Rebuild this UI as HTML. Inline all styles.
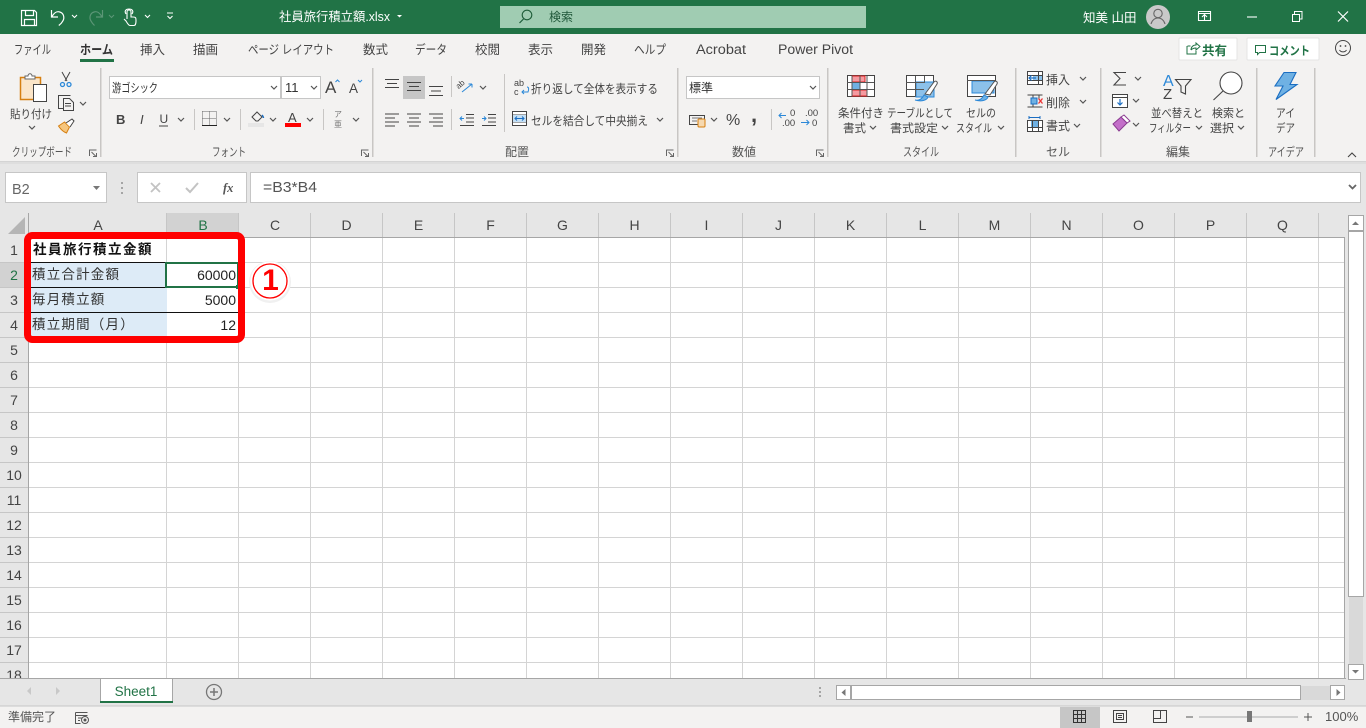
<!DOCTYPE html>
<html lang="ja"><head><meta charset="utf-8"><title>社員旅行積立額.xlsx</title>
<style>
html,body{margin:0;padding:0;background:#e6e6e6;overflow:hidden}
svg{display:block;position:absolute;left:0;top:0}
text{font-family:"Liberation Sans","Noto Sans CJK JP",sans-serif;font-size:12px;fill:#444}
.t{fill:#444;font-size:12.5px}
.g{font-size:12px;fill:#555;text-anchor:middle}
.h{font-size:14px;fill:#444;text-anchor:middle}
.c{font-size:14px;fill:#222}
.r{font-size:14px;fill:#222;text-anchor:end}
.i{fill:none;stroke:#444;stroke-width:1}
.w{fill:none;stroke:#fff;stroke-width:1.4}
</style></head><body>
<svg width="1366" height="728" viewBox="0 0 1366 728" xmlns="http://www.w3.org/2000/svg">
<defs><path id="v" d="M0 0l3 3 3-3" fill="none" stroke="#555" stroke-width="1.2"/>
<path id="vw" d="M0 0l2.500 2.500L5 0" fill="none" stroke="#fff" stroke-width="1.100"/>
<path id="dl" d="M.5 6v-6h7M2.500 2l4.500 4.500M7.500 3v3.500h-3.500" fill="none" stroke="#666" stroke-width="1"/></defs>

<rect width="1366" height="728" fill="#e6e6e6"/>
<!-- title bar -->
<rect width="1366" height="34" fill="#217346"/>
<path class="w" style="stroke-width:1.200" d="M21.500 10.500h13l2 2v13h-15zM25.500 10.500v5h8v-5M24.500 25.500v-6h10v6"/>
<path class="w" style="stroke-width:1.200" d="M51.500 10v7h6.500M51.800 17c2-4 5-6 8-5 4 1 5 6 3 9-1 2-2 3-4 4.500"/>
<use href="#vw" x="72" y="15"/>
<path d="M102.500 10v7h-6.500M102 17c-2-4-5-6-8-5-4 1-5 6-3 9 1 2 2 3 3.500 4.500" fill="none" stroke="#5c9677" stroke-width="1.200"/>
<path d="M109 15l2.500 2.500 2.500-2.500" fill="none" stroke="#5c9677"/>
<path class="w" style="stroke-width:1.100" d="M127 19v-7a2 2 0 0 1 4 0v5h2c3 0 3 1 3 4 0 3-1 4.500-2 4.500h-4c-1 0-2-1-4-4.500l-2-2M126 14c-2-3 0-5 3-5s5 2 3 5"/>
<use href="#vw" x="145" y="15"/>
<path d="M167 13h6M167.500 16l2.500 2.500 2.500-2.500" fill="none" stroke="#fff" stroke-width="1.100"/>
<text x="279" y="21" style="font-size:12.500px;fill:#fff" textLength="111" lengthAdjust="spacingAndGlyphs">社員旅行積立額.xlsx</text>
<path d="M397 15h5l-2.500 2.500z" fill="#fff"/>
<rect x="500" y="6" width="366" height="22" fill="#a0ccb2"/>
<circle cx="527" cy="15" r="4.800" fill="none" stroke="#1d5c38" stroke-width="1.100"/><path d="M523.500 19l-4 4" stroke="#1d5c38" stroke-width="1.200"/>
<text x="549" y="21" style="font-size:12px;fill:#20583a">検索</text>
<text x="1083" y="22" style="font-size:12.500px;fill:#fff">知美 山田</text>
<circle cx="1158" cy="17" r="12" fill="#c9c9c9"/>
<circle cx="1158" cy="13.500" r="4.200" fill="none" stroke="#666" stroke-width="1.100"/><path d="M1151 24c1-4 4-6 7-6s6 2 7 6" fill="none" stroke="#666" stroke-width="1.100"/>
<path class="w" style="stroke-width:1.100" d="M1198.500 11.500h12v9h-12zM1198.500 13.500h12M1204.500 20v-5M1202 17l2.500-2.500 2.500 2.500"/>
<path d="M1247 17h10" stroke="#fff" stroke-width="1.100"/>
<path class="w" style="stroke-width:1" d="M1292.500 14.500h7v7h-7zM1294.500 14v-2.500h7.500v7.500h-2.500"/>
<path d="M1338 11.500l10 10M1348 11.500l-10 10" stroke="#fff" stroke-width="1.200"/>

<!-- ribbon -->
<rect y="34" width="1366" height="127" fill="#f3f2f1"/>
<rect y="161" width="1366" height="1" fill="#d4d4d4"/><rect y="162" width="1366" height="2" fill="#dedede"/>
<text x="14" y="54" class="t" textLength="37" lengthAdjust="spacingAndGlyphs">ファイル</text>
<text x="80" y="54" class="t" style="font-weight:700;fill:#333" textLength="33" lengthAdjust="spacingAndGlyphs">ホーム</text>
<rect x="80" y="59" width="34" height="3" fill="#217346"/>
<text x="140" y="54" class="t">挿入</text>
<text x="193" y="54" class="t">描画</text>
<text x="248" y="54" class="t" textLength="86" lengthAdjust="spacingAndGlyphs">ページ レイアウト</text>
<text x="363" y="54" class="t">数式</text>
<text x="415" y="54" class="t" textLength="32" lengthAdjust="spacingAndGlyphs">データ</text>
<text x="475" y="54" class="t">校閲</text>
<text x="528" y="54" class="t">表示</text>
<text x="581" y="54" class="t">開発</text>
<text x="634" y="54" class="t" textLength="32" lengthAdjust="spacingAndGlyphs">ヘルプ</text>
<text x="696" y="54" style="font-size:13.500px;fill:#444" textLength="50" lengthAdjust="spacingAndGlyphs">Acrobat</text>
<text x="778" y="54" style="font-size:13.500px;fill:#444" textLength="75" lengthAdjust="spacingAndGlyphs">Power Pivot</text>

<rect x="1179" y="38" width="58" height="22" rx="1" fill="#fff" stroke="#e4e4e4"/>
<path d="M1187 46v8h9v-3M1187.500 46h3M1191 50c0-3 2-5 5-5v-2l4 3.500-4 3.500v-2c-2 0-4 1-5 2" fill="none" stroke="#217346"/>
<text x="1202" y="55" style="font-size:12.500px;font-weight:700;fill:#217346">共有</text>
<rect x="1247" y="38" width="72" height="22" rx="1" fill="#fff" stroke="#e4e4e4"/>
<path d="M1255.500 45.500h10v7h-6l-2 2v-2h-2z" fill="none" stroke="#217346"/>
<text x="1269" y="55" style="font-size:12px;font-weight:700;fill:#217346" textLength="41" lengthAdjust="spacingAndGlyphs">コメント</text>
<circle cx="1343" cy="48" r="7.500" fill="none" stroke="#444"/><circle cx="1340.500" cy="46" r=".9" fill="#444"/><circle cx="1345.500" cy="46" r=".9" fill="#444"/><path d="M1339.500 50c1.500 2.500 5.500 2.500 7 0" fill="none" stroke="#444"/>

<g fill="#c8c6c4">
<rect x="100" y="68" width="1.500" height="89"/><rect x="372" y="68" width="1.500" height="89"/><rect x="677" y="68" width="1.500" height="89"/><rect x="827" y="68" width="1.500" height="89"/><rect x="1015" y="68" width="1.500" height="89"/><rect x="1100" y="68" width="1.500" height="89"/><rect x="1256" y="68" width="1.500" height="89"/><rect x="1314" y="68" width="1.500" height="89"/>
<rect x="194" y="109" width="1" height="21"/><rect x="240" y="109" width="1" height="21"/><rect x="323" y="109" width="1" height="21"/>
<rect x="451" y="76" width="1" height="21"/><rect x="451" y="109" width="1" height="21"/><rect x="504" y="74" width="1" height="58"/><rect x="771" y="109" width="1" height="21"/>
</g>

<!-- clipboard -->
<rect x="20.500" y="77.500" width="20" height="22" fill="#fbe5c8" stroke="#d67f10" stroke-width="1.500"/>
<path d="M25 78v-2h3c0-3 4-3 4 0h3v3h-10z" fill="#fff" stroke="#666"/>
<rect x="33.500" y="84.500" width="13" height="17" fill="#fff" stroke="#444"/>
<text x="10" y="118" style="font-size:11.500px;fill:#444" textLength="42" lengthAdjust="spacingAndGlyphs">貼り付け</text>
<use href="#v" x="29" y="126"/>
<path d="M62 72l5 9M70 72l-5 9" fill="none" stroke="#444"/><circle cx="62.500" cy="84.500" r="2" fill="none" stroke="#2b88d8" stroke-width="1.300"/><circle cx="69" cy="84.500" r="2" fill="none" stroke="#2b88d8" stroke-width="1.300"/>
<path d="M63 108.500h-4.500v-13h9l3 0M63.500 98.500h6l4 4v8h-10zM65 103.500h6M65 106h6" fill="none" stroke="#444"/>
<use href="#v" x="80" y="102"/>
<path d="M58.500 126l6-4 5 5-3 6c-3-1-6-4-8-7z" fill="#f6c67e" stroke="#d67f10"/><path d="M66 123l6-4 2 2-4 6" fill="#fff" stroke="#444"/>
<text x="12" y="156" style="font-size:12px;fill:#555" textLength="60" lengthAdjust="spacingAndGlyphs">クリップボード</text>
<use href="#dl" x="89" y="150"/>

<!-- font -->
<rect x="109.500" y="76.500" width="171" height="22" fill="#fff" stroke="#c6c6c6"/>
<text x="112" y="92" style="font-size:12px;fill:#333" textLength="46" lengthAdjust="spacingAndGlyphs">游ゴシック</text>
<use href="#v" x="271" y="86"/>
<rect x="281.500" y="76.500" width="39" height="22" fill="#fff" stroke="#c6c6c6"/>
<text x="285" y="92" style="font-size:13px;fill:#333">11</text>
<use href="#v" x="311" y="86"/>
<text x="325" y="93" style="font-size:17px;fill:#444">A</text><path d="M335.500 82l2-2 2 2" fill="none" stroke="#2b88d8"/>
<text x="349" y="93" style="font-size:13.500px;fill:#444">A</text><path d="M358 80l2 2 2-2" fill="none" stroke="#2b88d8"/>
<text x="116" y="124" style="font-weight:700;font-size:13px;fill:#444">B</text>
<text x="140" y="124" style="font-style:italic;font-size:13px;fill:#444">I</text>
<text x="159.500" y="123" style="font-size:12px;fill:#444">U</text><path d="M159 126h9" stroke="#444"/>
<use href="#v" x="178" y="118"/>
<path d="M202.500 111.500h14v14M202.500 111.500v14M209.500 111.500v14M202.500 118.500h14" fill="none" stroke="#666" stroke-dasharray="1 1"/><path d="M202 125.500h15" stroke="#222"/>
<use href="#v" x="224" y="118"/>
<path d="M252 117l5-5 5 5-4 4h-2z" fill="none" stroke="#444"/><path d="M262 115c1 1 1.500 2 1.500 3" stroke="#1b6ec2" stroke-width="1.500"/><rect x="248" y="123" width="16" height="4" fill="#e6e6e6"/>
<use href="#v" x="270" y="118"/>
<text x="288" y="122" style="font-size:13px;fill:#444">A</text><rect x="285" y="123" width="16" height="4" fill="#f00"/>
<use href="#v" x="307" y="118"/>
<text x="334" y="117" style="font-size:8px;fill:#777">ア</text><text x="334" y="127" style="font-size:8px;fill:#777">亜</text>
<use href="#v" x="353" y="118"/>
<text x="229" y="156" class="g" textLength="34" lengthAdjust="spacingAndGlyphs">フォント</text>
<use href="#dl" x="361" y="150"/>

<!-- alignment -->
<rect x="403" y="76" width="22" height="23" fill="#c6c6c6"/>
<path d="M385 79.500h14M387 83.500h10M385 87.500h14M407 82.500h14M409 86.500h10M407 90.500h14M429 86.500h14M431 91h10M429 95.500h14" stroke="#444" fill="none"/>
<path d="M385 114h14M385 118h10M385 122h14M385 126h10M407 114h14M409 118h10M407 122h14M409 126h10M429 114h14M433 118h10M429 122h14M433 126h10" stroke="#444"/>
<path d="M462 92l10-8M472 84h-3.500M472 84v3.500" fill="none" stroke="#2b88d8"/><text x="458" y="88" style="font-size:8px;fill:#444" transform="rotate(-40 460 88)">ab</text>
<use href="#v" x="480" y="86"/>
<path d="M460 125.500h14M466 114.500h8M466 118h8M466 122h8" stroke="#444"/><path d="M464 118.500h-4m2-2l-2 2 2 2" fill="none" stroke="#2b88d8"/>
<path d="M482 125.500h14M488 114.500h8M488 122h8M488 118h8" stroke="#444"/><path d="M482 118.500h4m-2-2l2 2-2 2" fill="none" stroke="#2b88d8"/>
<text x="514" y="86" style="font-size:9px;fill:#444">ab</text><text x="514" y="95" style="font-size:9px;fill:#444">c</text><path d="M527 87c2 0 2 2 1 5h-6m2-2l-2 2 2 2" fill="none" stroke="#2b88d8"/>
<text x="531" y="93" style="font-size:12px;fill:#444" textLength="127" lengthAdjust="spacingAndGlyphs">折り返して全体を表示する</text>
<rect x="512.500" y="111.500" width="14" height="14" fill="#fff" stroke="#444"/><path d="M512 115h15M512 122h15" stroke="#444"/><rect x="513" y="115" width="13" height="7" fill="#c5e0f5"/><path d="M515 118.500h9m-2-2l2 2-2 2m-5-4l-2 2 2 2" fill="none" stroke="#1b6ec2"/>
<text x="531" y="125" style="font-size:12px;fill:#444" textLength="117" lengthAdjust="spacingAndGlyphs">セルを結合して中央揃え</text>
<use href="#v" x="657" y="118"/>
<text x="517" y="156" class="g">配置</text>
<use href="#dl" x="666" y="150"/>

<!-- number -->
<rect x="686.500" y="76.500" width="133" height="22" fill="#fff" stroke="#c6c6c6"/>
<text x="689" y="92" style="font-size:12px;fill:#333">標準</text>
<use href="#v" x="810" y="86"/>
<rect x="689.500" y="115.500" width="15" height="9" fill="none" stroke="#444"/><path d="M692 118h10M692 121h5" stroke="#777"/>
<rect x="698" y="119" width="7" height="8" rx="1" fill="#f6d9b0" stroke="#d67f10"/>
<use href="#v" x="711" y="118"/>
<text x="726" y="125" style="font-size:16px;fill:#444">%</text>
<text x="751" y="122" style="font-size:22px;font-weight:700;fill:#444">,</text>
<text x="790" y="116" style="font-size:9.500px;fill:#444">0</text><text x="782" y="126" style="font-size:9.500px;fill:#444">.00</text><path d="M786 115.500h-7m2.500-2.500l-2.500 2.500 2.500 2.500" fill="none" stroke="#2b88d8"/>
<text x="805" y="116" style="font-size:9.500px;fill:#444">.00</text><text x="812" y="126" style="font-size:9.500px;fill:#444">0</text><path d="M801 122.500h8m-2.500-2.500l2.500 2.500-2.500 2.500" fill="none" stroke="#2b88d8"/>
<text x="744" y="156" class="g">数値</text>
<use href="#dl" x="816" y="150"/>

<!-- styles -->
<rect x="847.500" y="75.500" width="27" height="21" fill="#fff" stroke="#444"/>
<rect x="852" y="76" width="13" height="6" fill="#f59aa0" stroke="#d22"/><rect x="852" y="83" width="8" height="6" fill="#6fb1e3"/><rect x="852" y="90" width="15" height="6" fill="#f59aa0" stroke="#d22"/>
<path d="M847 82.500h27M847 89.500h27M852 76v20M860 76v20M867 76v20" stroke="#555" fill="none"/>
<text x="838" y="117" style="font-size:11.500px;fill:#444" textLength="46" lengthAdjust="spacingAndGlyphs">条件付き</text>
<text x="843" y="132" style="font-size:11.500px;fill:#444">書式</text><use href="#v" x="870" y="126"/>
<rect x="906.500" y="75.500" width="27" height="21" fill="#fff" stroke="#444"/>
<rect x="916" y="82" width="18" height="15" fill="#8cc1ea" stroke="#2b88d8"/><path d="M906 82.500h18M906 89.500h18M915.500 76v20M924.500 76v7" stroke="#555"/>
<path d="M925 94l9-12c2-2 4 0 3 2l-7 11z" fill="#fff" stroke="#555"/><path d="M915 100c4 1 7-1 9-5l4 2c-1 3-6 5-13 3z" fill="#6fb1e3" stroke="#2b88d8"/>
<text x="887" y="117" style="font-size:11.500px;fill:#444" textLength="66" lengthAdjust="spacingAndGlyphs">テーブルとして</text>
<text x="890" y="132" style="font-size:11.500px;fill:#444" textLength="48" lengthAdjust="spacingAndGlyphs">書式設定</text><use href="#v" x="942" y="126"/>
<rect x="967.500" y="75.500" width="28" height="21" fill="#fff" stroke="#444"/>
<rect x="972" y="81" width="22" height="12" fill="#8cc1ea" stroke="#2b88d8"/><path d="M967 80.500h28" stroke="#555"/>
<path d="M985 94l9-12c2-2 4 0 3 2l-7 11z" fill="#fff" stroke="#555"/><path d="M975 100c4 1 7-1 9-5l4 2c-1 3-6 5-13 3z" fill="#6fb1e3" stroke="#2b88d8"/>
<text x="966" y="117" style="font-size:11.500px;fill:#444" textLength="30" lengthAdjust="spacingAndGlyphs">セルの</text>
<text x="956" y="132" style="font-size:11.500px;fill:#444" textLength="36" lengthAdjust="spacingAndGlyphs">スタイル</text><use href="#v" x="998" y="126"/>
<text x="921" y="156" class="g" textLength="36" lengthAdjust="spacingAndGlyphs">スタイル</text>

<!-- cells -->
<rect x="1027.500" y="71.500" width="15" height="13" fill="#fff" stroke="#444"/><rect x="1033" y="75" width="9" height="6" fill="#8cc1ea"/><path d="M1027 75.500h15M1027 80.500h15M1038.500 72v12" stroke="#444"/><path d="M1036 78h-7m2.500-2.500l-2.500 2.500 2.500 2.500" fill="none" stroke="#1b6ec2" stroke-width="1.200"/>
<text x="1046" y="84" style="font-size:12px;fill:#444">挿入</text><use href="#v" x="1080" y="77"/>
<path d="M1027.500 95h15M1027.500 107h15M1033 95v12M1039 95v4" stroke="#444"/><rect x="1031" y="98" width="6" height="6" fill="#6fb1e3" stroke="#1b6ec2"/><path d="M1038.500 98.500l4 5M1042.500 98.500l-4 5" stroke="#e33" stroke-width="1.300"/>
<text x="1046" y="107" style="font-size:12px;fill:#444">削除</text><use href="#v" x="1080" y="100"/>
<rect x="1027.500" y="120.500" width="15" height="11" fill="#fff" stroke="#444"/><rect x="1031" y="121" width="8" height="6" fill="#6fb1e3"/><path d="M1027 127.500h15M1032.500 120v12M1038.500 120v12" stroke="#444"/><path d="M1029 117.500h11M1029 116v3M1040 116v3" stroke="#1b6ec2"/>
<text x="1046" y="130" style="font-size:12px;fill:#444">書式</text><use href="#v" x="1074" y="124"/>
<text x="1058" y="156" class="g">セル</text>

<!-- editing -->
<path d="M1126 72.500h-12l6 6-6 6.500h12" fill="none" stroke="#444" stroke-width="1.100"/><use href="#v" x="1135" y="77"/>
<rect x="1112.500" y="94.500" width="15" height="13" fill="#fff" stroke="#444"/><path d="M1112 97.500h16" stroke="#444"/><path d="M1120 99v6m-2.500-2.500l2.500 2.500 2.500-2.500" fill="none" stroke="#1b6ec2" stroke-width="1.200"/><use href="#v" x="1133" y="99"/>
<path d="M1113 124l8-7 6 6-8 8z" fill="#c36fc9" stroke="#8a3b90"/><path d="M1121 117l3-2 6 6-3 2z" fill="#fff" stroke="#8a3b90"/><use href="#v" x="1133" y="123"/>
<text x="1163" y="86" style="font-size:16px;fill:#2b88d8">A</text><text x="1163" y="99" style="font-size:15px;fill:#444">Z</text>
<path d="M1175.500 79.500h15.500l-5.500 6.500v8l-4.500-2v-6z" fill="none" stroke="#444" stroke-width="1.100"/>
<text x="1151" y="117" style="font-size:11.500px;fill:#444" textLength="52" lengthAdjust="spacingAndGlyphs">並べ替えと</text>
<text x="1149" y="132" style="font-size:11.500px;fill:#444" textLength="42" lengthAdjust="spacingAndGlyphs">フィルター</text><use href="#v" x="1196" y="126"/>
<circle cx="1231" cy="83" r="11" fill="#fff" stroke="#444" stroke-width="1.100"/><path d="M1223 91l-9.500 9" stroke="#444" stroke-width="1.100"/>
<text x="1212" y="117" style="font-size:11.500px;fill:#444" textLength="33" lengthAdjust="spacingAndGlyphs">検索と</text>
<text x="1210" y="132" style="font-size:11.500px;fill:#444" textLength="24" lengthAdjust="spacingAndGlyphs">選択</text><use href="#v" x="1238" y="126"/>
<text x="1178" y="156" class="g">編集</text>

<!-- ideas -->
<path d="M1284 72.500h12l-6 12h7l-21 15 7-13.500h-8z" fill="#6fb1e3" stroke="#1b6ec2" stroke-width="1.100"/>
<text x="1276" y="117" style="font-size:11.500px;fill:#444" textLength="19" lengthAdjust="spacingAndGlyphs">アイ</text>
<text x="1276" y="132" style="font-size:11.500px;fill:#444" textLength="19" lengthAdjust="spacingAndGlyphs">デア</text>
<text x="1286" y="156" class="g" textLength="36" lengthAdjust="spacingAndGlyphs">アイデア</text>
<path d="M1348 157l4-4 4 4" fill="none" stroke="#444" stroke-width="1.100"/>

<!-- formula bar -->
<rect x="5.500" y="172.500" width="101" height="30" fill="#fff" stroke="#c6c6c6"/>
<text x="12" y="194" style="font-size:14.500px;fill:#666">B2</text>
<path d="M93 186h7l-3.500 4z" fill="#777"/>
<g fill="#a5a5a5"><rect x="121" y="182" width="2" height="2"/><rect x="121" y="187" width="2" height="2"/><rect x="121" y="192" width="2" height="2"/></g>
<rect x="137.500" y="172.500" width="109" height="30" fill="#fff" stroke="#c6c6c6"/>
<path d="M151 183l9 9M160 183l-9 9" stroke="#c3c3c3" stroke-width="1.800"/>
<path d="M186 188l4 4 8-9" fill="none" stroke="#c3c3c3" stroke-width="2"/>
<text x="223" y="192" style="font-family:'Liberation Serif',serif;font-style:italic;font-weight:700;font-size:12.500px;fill:#555">fx</text>
<rect x="250.500" y="172.500" width="1110" height="30" fill="#fff" stroke="#c6c6c6"/>
<text x="263" y="192" style="font-size:14.500px;fill:#555" textLength="54" lengthAdjust="spacingAndGlyphs">=B3*B4</text>
<path d="M1349 185l3.500 3.500 3.500-3.500" fill="none" stroke="#666" stroke-width="1.800"/>

<!-- grid -->
<rect x="0" y="213" width="1346" height="25" fill="#e6e6e6"/>
<rect x="29" y="238" width="1316" height="440" fill="#fff"/>
<rect x="167" y="213" width="72" height="24" fill="#d2d2d2"/>
<rect x="0" y="263" width="28" height="24" fill="#d2d2d2"/>
<path d="M25 234v-17l-17 17z" fill="#b5b5b5"/>
<g stroke="#d4d4d4" stroke-width="1">
<path d="M29 262.500h1316M29 287.500h1316M29 312.500h1316M29 337.500h1316M29 362.500h1316M29 387.500h1316M29 412.500h1316M29 437.500h1316M29 462.500h1316M29 487.500h1316M29 512.500h1316M29 537.500h1316M29 562.500h1316M29 587.500h1316M29 612.500h1316M29 637.500h1316M29 662.500h1316"/>
<path d="M166.500 238v440M238.500 238v440M310.500 238v440M382.500 238v440M454.500 238v440M526.500 238v440M598.500 238v440M670.500 238v440M742.500 238v440M814.500 238v440M886.500 238v440M958.500 238v440M1030.500 238v440M1102.500 238v440M1174.500 238v440M1246.500 238v440M1318.500 238v440"/>
</g>
<g stroke="#c6c6c6">
<path d="M0 262.500h28M0 287.500h28M0 312.500h28M0 337.500h28M0 362.500h28M0 387.500h28M0 412.500h28M0 437.500h28M0 462.500h28M0 487.500h28M0 512.500h28M0 537.500h28M0 562.500h28M0 587.500h28M0 612.500h28M0 637.500h28M0 662.500h28"/>
<path d="M166.500 213v24M238.500 213v24M310.500 213v24M382.500 213v24M454.500 213v24M526.500 213v24M598.500 213v24M670.500 213v24M742.500 213v24M814.500 213v24M886.500 213v24M958.500 213v24M1030.500 213v24M1102.500 213v24M1174.500 213v24M1246.500 213v24M1318.500 213v24"/>
</g>
<path d="M28.500 213v465M28 237.500h1317M1344.500 237v441" stroke="#a6a6a6"/>
<g>
<text x="98" y="230" class="h">A</text><text x="203" y="230" class="h" style="fill:#217346">B</text><text x="275" y="230" class="h">C</text><text x="346.500" y="230" class="h">D</text><text x="418.500" y="230" class="h">E</text><text x="490.500" y="230" class="h">F</text><text x="562.500" y="230" class="h">G</text><text x="634.500" y="230" class="h">H</text><text x="706.500" y="230" class="h">I</text><text x="778.500" y="230" class="h">J</text><text x="850.500" y="230" class="h">K</text><text x="922.500" y="230" class="h">L</text><text x="994.500" y="230" class="h">M</text><text x="1066.500" y="230" class="h">N</text><text x="1138.500" y="230" class="h">O</text><text x="1210.500" y="230" class="h">P</text><text x="1282.500" y="230" class="h">Q</text>
<text x="14" y="255" class="h">1</text><text x="14" y="280" class="h" style="fill:#217346">2</text><text x="14" y="305" class="h">3</text><text x="14" y="330" class="h">4</text><text x="14" y="355" class="h">5</text><text x="14" y="380" class="h">6</text><text x="14" y="405" class="h">7</text><text x="14" y="430" class="h">8</text><text x="14" y="455" class="h">9</text><text x="14" y="480" class="h">10</text><text x="14" y="505" class="h">11</text><text x="14" y="530" class="h">12</text><text x="14" y="555" class="h">13</text><text x="14" y="580" class="h">14</text><text x="14" y="605" class="h">15</text><text x="14" y="630" class="h">16</text><text x="14" y="655" class="h">17</text><text x="14" y="680" class="h">18</text>
</g>

<!-- data -->
<rect x="30" y="263" width="137" height="74" fill="#ddebf7"/>
<path d="M30 262.500h208M30 287.500h208M30 312.500h208" stroke="#111"/>
<text x="33" y="254" style="font-size:13.500px;font-weight:700;letter-spacing:1.500px;fill:#111">社員旅行積立金額</text>
<text x="32" y="279" style="font-size:13.500px;letter-spacing:1.200px;fill:#333">積立合計金額</text>
<text x="32" y="304" style="font-size:13.500px;letter-spacing:1.200px;fill:#333">毎月積立額</text>
<text x="32" y="329" style="font-size:13.500px;letter-spacing:1.200px;fill:#333">積立期間（月）</text>
<text x="236" y="280" class="r">60000</text>
<text x="236" y="305" class="r">5000</text>
<text x="236" y="330" class="r">12</text>
<rect x="166" y="263" width="72" height="24" fill="none" stroke="#217346" stroke-width="2"/>
<rect x="236" y="285" width="4" height="4" fill="#217346"/>
<rect x="27.500" y="235.500" width="214" height="104" rx="5" fill="none" stroke="#f00" stroke-width="7"/>
<circle cx="270" cy="282" r="21" fill="#f0f0f0"/>
<circle cx="270" cy="281" r="19.500" fill="#fff"/>
<circle cx="270" cy="281" r="17" fill="#fff" stroke="#f00" stroke-width="1.300"/>
<text x="270.500" y="290" style="font-size:30px;font-weight:700;fill:#f00;text-anchor:middle">1</text>

<!-- right scroll -->
<rect x="1346" y="213" width="20" height="493" fill="#e6e6e6"/>
<rect x="1348.500" y="215.500" width="15" height="15" fill="#fff" stroke="#a6a6a6"/>
<path d="M1352 225l3.500-3.500 3.500 3.500z" fill="#777"/>
<rect x="1348.500" y="231.500" width="15" height="365" fill="#fff" stroke="#a6a6a6"/>
<rect x="1349" y="597" width="14" height="67" fill="#d9d9d9"/>
<rect x="1348.500" y="664.500" width="15" height="15" fill="#fff" stroke="#a6a6a6"/>
<path d="M1352 670l3.500 3.500 3.500-3.500z" fill="#777"/>

<!-- sheet tabs -->
<rect x="0" y="678" width="1346" height="28" fill="#e6e6e6"/>
<path d="M0 678.500h1346" stroke="#a6a6a6"/>
<path d="M31 687v8l-4-4zM56 687v8l4-4z" fill="#c8c8c8"/>
<rect x="100.500" y="678.500" width="72" height="24" fill="#fff" stroke="#a6a6a6"/>
<rect x="100" y="701" width="73" height="2" fill="#217346"/>
<text x="136" y="696" style="font-size:13.500px;fill:#217346;text-anchor:middle">Sheet1</text>
<circle cx="214" cy="692" r="7.500" fill="none" stroke="#777" stroke-width="1.300"/><path d="M210 692h8M214 688v8" stroke="#777" stroke-width="1.500"/>
<g fill="#a5a5a5"><rect x="819" y="687" width="2" height="2"/><rect x="819" y="691" width="2" height="2"/><rect x="819" y="695" width="2" height="2"/></g>
<rect x="836.500" y="685.500" width="14" height="14" fill="#fff" stroke="#a6a6a6"/><path d="M845.500 689v7l-4-3.500z" fill="#777"/>
<rect x="851.500" y="685.500" width="449" height="14" fill="#fff" stroke="#a6a6a6"/>
<rect x="1301" y="686" width="29" height="14" fill="#d9d9d9"/>
<rect x="1330.500" y="685.500" width="14" height="14" fill="#fff" stroke="#a6a6a6"/><path d="M1336.500 689v7l4-3.500z" fill="#777"/>

<!-- status -->
<rect y="706" width="1366" height="22" fill="#f3f2f1"/><path d="M0 706h1366" stroke="#c6c6c6"/>
<text x="8" y="721" style="font-size:12px;fill:#555">準備完了</text>
<path d="M75.500 712.500h12M75.500 712.500v11h5M75.500 715.500h12M78 718h4M78 720.500h2" fill="none" stroke="#555"/><circle cx="85" cy="720" r="3.500" fill="none" stroke="#555"/><circle cx="85" cy="720" r="1.500" fill="#555"/>
<rect x="1060" y="707" width="40" height="21" fill="#c6c6c6"/>
<path d="M1073.500 710.500h12v12h-12zM1077.500 710.500v12M1081.500 710.500v12M1073.500 714.500h12M1073.500 718.500h12" fill="none" stroke="#333"/>
<path d="M1113.500 710.500h13v12h-13zM1116.500 713.500h7v6h-7zM1118 715.500h4M1118 717.500h4" fill="none" stroke="#444"/>
<path d="M1153.500 710.500h13v12h-13zM1153.500 718.500h7v-8M1160.500 710.500v8" fill="none" stroke="#444"/>
<path d="M1186 717h7M1304 717h8M1308 713v8" stroke="#555"/>
<path d="M1199 717h99" stroke="#aaa"/>
<rect x="1247" y="711" width="5" height="11" fill="#777"/>
<text x="1325" y="721" style="font-size:13px;fill:#555">100%</text>
</svg>
</body></html>
